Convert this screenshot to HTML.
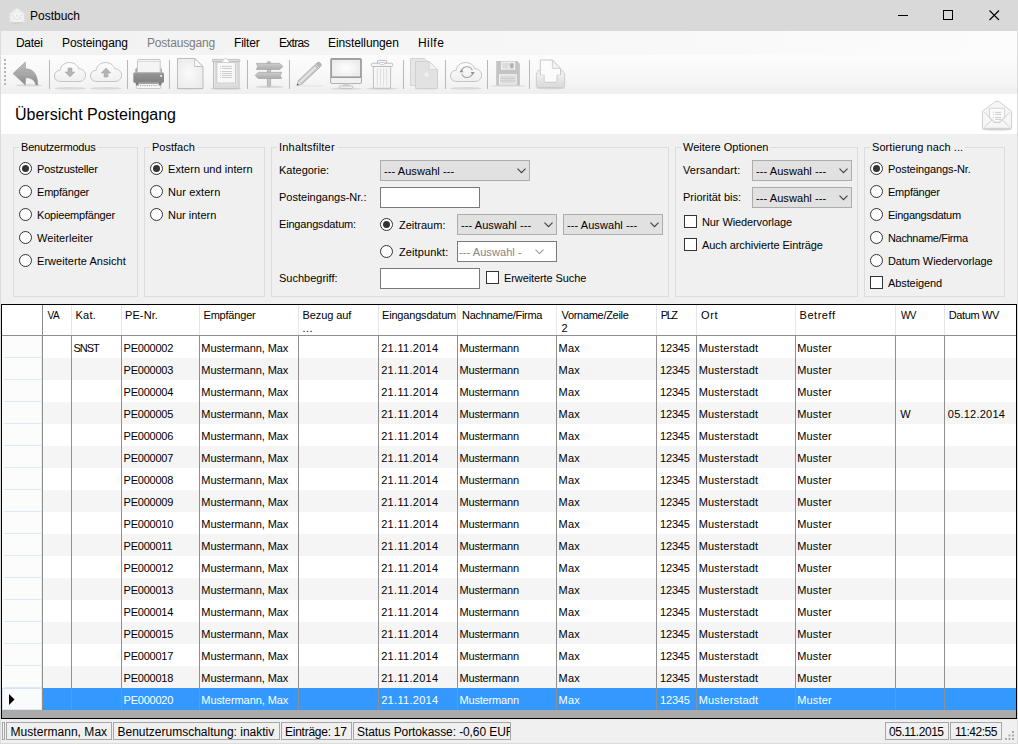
<!DOCTYPE html>
<html lang="de"><head><meta charset="utf-8"><title>Postbuch</title>
<style>
html,body{margin:0;padding:0}
body{width:1018px;height:744px;overflow:hidden;background:#f0f0f0;font-family:"Liberation Sans",sans-serif;font-size:11px;color:#000}
.win{position:relative;width:1018px;height:744px;overflow:hidden;background:#f0f0f0}
.win div,.win span,.win svg{position:absolute;box-sizing:border-box}
.title{left:0;top:0;width:1018px;height:31px;background:#d9d9d9}
.ticon{left:8px;top:6px}
.ttext{left:30px;top:9px;font-size:12px;line-height:15px;white-space:nowrap}
.menu{left:1px;top:31px;width:1016px;height:24px;background:linear-gradient(90deg,#f1f1f1,#fcfcfc)}
.menu span{top:5px;font-size:12px;line-height:15px;white-space:nowrap;margin-left:-1px}
.menu .dis{color:#7c7c7c}
.tb{left:1px;top:55px;width:1016px;height:39px;background:linear-gradient(180deg,#fcfcfc 0%,#f8f8f8 50%,#efefef 100%)}
.tb .sep{top:5px;width:1px;height:29px;background:#b9b9b9}
.head{left:1px;top:94px;width:1016px;height:40px;background:#fff}
.htext{left:14px;top:11px;font-size:16px;line-height:19px;white-space:nowrap}
.hicon{left:977px;top:4px}
.filter{left:1px;top:134px;width:1016px;height:170px;background:#f0f0f0}
.gb{border:1px solid #dcdcdc}
.gbl{background:#f0f0f0;padding:0 2px;font-size:11px;line-height:13px;white-space:nowrap}
.lb{font-size:11px;line-height:13px;white-space:nowrap}
.rd{width:13px;height:13px;border:1px solid #333;border-radius:50%;background:#fff}
.rd.on::after{content:"";position:absolute;left:2px;top:2px;width:7px;height:7px;border-radius:50%;background:#333}
.cb{width:13px;height:13px;border:1px solid #333;background:#fff}
.tx{height:21px;border:1px solid #7a7a7a;background:#fff}
.dd{height:21px;border:1px solid #adadad;background:#e1e1e1;font-size:11px;line-height:21px;padding-left:3px;white-space:nowrap;letter-spacing:.08px}
.dd.off{padding-left:1px;background:#fff;border-color:#7a7a7a;color:#858585}
.dd svg{right:3.5px;top:7px}
.dd.off svg{right:12px}
.grid{left:1px;top:304px;width:1016px;height:415px;background:#fff;border:1px solid #000;box-shadow:inset 0 0 0 1px rgba(0,0,0,.45)}
.ghead{left:0;top:0;width:1014px;height:31px;background:#fff;border-bottom:1px solid #8e8e8e}
.hc{top:0;height:30px;border-right:1px solid #e6e6e6;font-size:11px;line-height:13px;padding:4px 0 0 3px;white-space:nowrap;overflow:hidden}
.hc0{border-right-color:#8c8c8c}
.hcl{border-right:0}
.row{left:0;width:1014px;height:22px;background:#fff}
.row.alt{background:#f5f5f5}
.row.sel{background:#3399ff;color:#fff}
.row .c{top:0;height:22px;border-right:1px solid #909090;font-size:11px;line-height:13px;padding:6px 0 0 1px;white-space:nowrap;overflow:hidden}
.row .k13{border-right:0}
.row .rh{top:0;height:22px;background:#fcfcfc;border-right:1px solid #909090}
.row .rh::after{content:"";position:absolute;left:2px;right:0;bottom:0;height:1px;background:#dbe8f8}
.row .rh::before{content:"";position:absolute;right:0;top:0;bottom:0;width:1px;background:#e3edf9}
.row.sel .rh{background:#fafbfd;box-shadow:inset 0 0 0 1px #d5e3f5}
.gfoot{left:0;top:405px;width:1014px;height:8px;background:#ababab}
.status{left:0;top:719px;width:1018px;height:25px;background:#f0f0f0}
.sp{top:3px;height:18px;border:1px solid #a6a6a6;background:#f0f0f0;font-size:12px;line-height:14px;padding:2px 0 0 3px;white-space:nowrap;overflow:hidden}
.sgrip{left:2px;top:3px;width:3px;height:18px;border:1px solid #a6a6a6;border-right-color:#a6a6a6;background:#f4f4f4}
.sz{left:1004px;top:11px}
.fl{left:0;top:0;width:0;height:0;overflow:visible}
.wb{background:#dbdbdb}
.win .hc span{position:static}

.row .k0{left:0px;width:41px;letter-spacing:0px;padding-left:1px}
.row .k1{left:41px;width:29px;letter-spacing:0px;padding-left:1px}
.row .k2{left:70px;width:50px;letter-spacing:-1.0px;padding-left:1.4px}
.row .k3{left:120px;width:78px;letter-spacing:-0.23px;padding-left:1.6px}
.row .k4{left:198px;width:99px;letter-spacing:-0.07px;padding-left:1.3px}
.row .k5{left:297px;width:80px;letter-spacing:0px;padding-left:1px}
.row .k6{left:377px;width:79px;letter-spacing:0.3px;padding-left:2.2px}
.row .k7{left:456px;width:99px;letter-spacing:-0.18px;padding-left:1.5px}
.row .k8{left:555px;width:100px;letter-spacing:0.25px;padding-left:1.5px}
.row .k9{left:655px;width:40px;letter-spacing:-0.17px;padding-left:3px}
.row .k10{left:695px;width:99px;letter-spacing:0.2px;padding-left:1.7px}
.row .k11{left:794px;width:100px;letter-spacing:0.18px;padding-left:1.2px}
.row .k12{left:894px;width:49px;letter-spacing:-0.5px;padding-left:4.2px}
.row .k13{left:943px;width:71px;letter-spacing:0.22px;padding-left:2.8px}
</style></head><body>
<div class="win">
<div class="title">
<svg class="ticon" width="18" height="18" viewBox="8 6 18 18"><ellipse cx="17" cy="22.300" rx="7.500" ry=".9" fill="#bdbdbd"/><path d="M9.900 22.200V13.500L16.300 8.500H17.700L24.200 13.500V22.200Z" fill="#f4f4f4" stroke="#e0e0e0" stroke-width=".7" stroke-linejoin="round"/><path d="M13.600 12.200H20.500V17L18.500 19.300H15.600L13.600 17Z" fill="#fcfcfc" stroke="#dcdcdc" stroke-width=".6"/><path d="M15.500 14H18.600V17.200H15.500Z" fill="#e6e6e6"/><path d="M10.800 14.300L15.700 18.800Q17 19.700 18.300 18.800L23.300 14.300M10.800 21.500L14.500 18M23.300 21.500L19.600 18" fill="none" stroke="#dcdcdc" stroke-width=".8"/></svg>
<span class="ttext">Postbuch</span>
<svg class="wbtn" style="left:898px;top:15px" width="12" height="2" viewBox="0 0 12 2"><rect x="0" y="0" width="10" height="1" fill="#000"/></svg>
<svg class="wbtn" style="left:943px;top:10px" width="12" height="12" viewBox="0 0 12 12"><rect x=".5" y=".5" width="9" height="9" fill="none" stroke="#000" stroke-width="1"/></svg>
<svg class="wbtn" style="left:989px;top:10px" width="12" height="12" viewBox="0 0 12 12"><path d="M.5 .5L10 10M10 .5L.5 10" fill="none" stroke="#000" stroke-width="1.1"/></svg>
</div>
<div class="menu">
<span style="left:16px;letter-spacing:-.3px">Datei</span><span style="left:62px;letter-spacing:-.07px">Posteingang</span><span style="left:147px;letter-spacing:-.2px" class="dis">Postausgang</span><span style="left:234px;letter-spacing:-.2px">Filter</span><span style="left:279px;letter-spacing:-.7px">Extras</span><span style="left:328px;letter-spacing:-.1px">Einstellungen</span><span style="left:418px;letter-spacing:.45px">Hilfe</span>
</div>
<div class="tb">
<svg style="left:0;top:0" width="1016" height="39" viewBox="1 55 1016 39">
<defs>
<linearGradient id="gArrow" x1="0" y1="0" x2="0" y2="1"><stop offset="0" stop-color="#bcbcbc"/><stop offset=".55" stop-color="#a6a6a6"/><stop offset="1" stop-color="#8a8a8a"/></linearGradient>
<linearGradient id="gCloud" x1="0" y1="0" x2="0" y2="1"><stop offset="0" stop-color="#fdfdfd"/><stop offset="1" stop-color="#efefef"/></linearGradient>
<linearGradient id="gPrn" x1="0" y1="0" x2="0" y2="1"><stop offset="0" stop-color="#b0b0b0"/><stop offset=".15" stop-color="#949494"/><stop offset="1" stop-color="#818181"/></linearGradient>
<radialGradient id="gPage" cx=".45" cy=".5" r=".7"><stop offset="0" stop-color="#fafafa"/><stop offset="1" stop-color="#e9e9e9"/></radialGradient>
<linearGradient id="gTray" x1="0" y1="0" x2="0" y2="1"><stop offset="0" stop-color="#f4f4f4"/><stop offset="1" stop-color="#dadada"/></linearGradient>
<linearGradient id="gSign" x1="0" y1="0" x2="0" y2="1"><stop offset="0" stop-color="#cdcdcd"/><stop offset="1" stop-color="#adadad"/></linearGradient>
<linearGradient id="gPost" x1="0" y1="0" x2="1" y2="0"><stop offset="0" stop-color="#a8a8a8"/><stop offset=".5" stop-color="#d0d0d0"/><stop offset="1" stop-color="#a8a8a8"/></linearGradient>
<radialGradient id="gScr" cx=".5" cy=".5" r=".55"><stop offset="0" stop-color="#ffffff"/><stop offset="1" stop-color="#ececec"/></radialGradient>
<linearGradient id="gPen" x1="0" y1="0" x2="0" y2="1"><stop offset="0" stop-color="#b9b9b9"/><stop offset=".45" stop-color="#ececec"/><stop offset="1" stop-color="#b4b4b4"/></linearGradient>
<path id="cloud" d="M7 19.500C3 19.500 .5 17.200 .5 13.800C.5 10.500 3 8.300 6.200 8.300C6.700 3.800 10.500 .5 15.500 .5C20 .5 23.500 3 24.800 6.800C28.800 6.800 31.500 9.600 31.500 13.200C31.500 16.800 28.800 19.500 25 19.500Z"/>
</defs>
<!-- grip -->
<g fill="#b5b5b5"><rect x="4" y="59" width="2" height="2"/><rect x="4" y="63" width="2" height="2"/><rect x="4" y="67" width="2" height="2"/><rect x="4" y="71" width="2" height="2"/><rect x="4" y="75" width="2" height="2"/><rect x="4" y="79" width="2" height="2"/><rect x="4" y="83" width="2" height="2"/></g>
<!-- separators -->
<g fill="#b8b8b8"><rect x="49" y="60" width="1" height="29"/><rect x="127" y="60" width="1" height="29"/><rect x="169" y="60" width="1" height="29"/><rect x="247" y="60" width="1" height="29"/><rect x="289" y="60" width="1" height="29"/><rect x="403" y="60" width="1" height="29"/><rect x="445" y="60" width="1" height="29"/><rect x="487" y="60" width="1" height="29"/><rect x="529" y="60" width="1" height="29"/></g>
<!-- back arrow -->
<ellipse cx="29" cy="85.300" rx="13.500" ry="1.200" fill="#dadada"/>
<path d="M13 73.500L25.300 62L25.700 68.800C33 68.800 38 74.500 37.700 85L35.800 85C35 80.500 31.500 77.800 25.700 77.800L25.300 85Z" fill="url(#gArrow)" stroke="#929292" stroke-width=".5" stroke-linejoin="round"/>
<!-- cloud down -->
<ellipse cx="70" cy="88.300" rx="16" ry="1.200" fill="#d9d9d9"/>
<use href="#cloud" x="54" y="62" fill="url(#gCloud)" stroke="#c4c4c4" stroke-width="1"/>
<path d="M68 68H72V72H74.800L70 77L65.200 72H68Z" fill="#b4b4b4" stroke="#a2a2a2" stroke-width=".5"/>
<!-- cloud up -->
<ellipse cx="106" cy="88.300" rx="16" ry="1.200" fill="#d9d9d9"/>
<use href="#cloud" x="90" y="62" fill="url(#gCloud)" stroke="#c4c4c4" stroke-width="1"/>
<path d="M104 77H108V73H110.800L106 68L101.200 73H104Z" fill="#b4b4b4" stroke="#a2a2a2" stroke-width=".5"/>
<!-- printer -->
<path d="M135.300 73V69L137 67.500V73ZM162 73V69L160.300 67.500V73Z" fill="#a9a9a9"/>
<path d="M137.500 73V60.700Q137.500 59.500 138.700 59.500H159Q160.200 59.500 160.200 60.700V73Z" fill="#f4f4f4" stroke="#c6c6c6"/>
<path d="M138 61.500H159.700" stroke="#d4d4d4" stroke-width=".8"/>
<rect x="136.300" y="81.500" width="24.500" height="7" rx="1" fill="#f6f6f6" stroke="#c9c9c9"/>
<path d="M135.300 82H138.600V85.500H136.300ZM162 82H158.700V85.500H161Z" fill="#7c7c7c"/>
<path d="M139 83.400H158.500" stroke="#8c8c8c" stroke-width=".9"/>
<path d="M140 85.500H158" stroke="#a0a0a0" stroke-width=".9" stroke-dasharray="1.200 1"/>
<rect x="133.300" y="72.300" width="30.700" height="10.500" rx="1.500" fill="url(#gPrn)"/>
<rect x="160.100" y="75.200" width="1.900" height="1.400" fill="#fff"/>
<!-- page -->
<ellipse cx="190.500" cy="88.900" rx="13" ry=".9" fill="#dcdcdc"/>
<path d="M177.500 58.500H194.700L203 66.500V88.500H177.500Z" fill="url(#gPage)" stroke="#bdbdbd"/>
<path d="M194.700 58.500V66.500H203Z" fill="#fcfcfc" stroke="#c2c2c2" stroke-linejoin="round"/>
<!-- clipboard -->
<ellipse cx="226" cy="88.800" rx="15.500" ry="1" fill="#d6d6d6"/>
<rect x="213.500" y="61" width="25.500" height="27.300" fill="#ececec" stroke="#bdbdbd"/>
<rect x="215.300" y="62" width="21.900" height="23" fill="none" stroke="#d2d2d2" stroke-width=".8"/>
<rect x="214" y="85.300" width="24.500" height="2.600" fill="#dadada"/>
<rect x="212.300" y="59.400" width="27.600" height="2.300" rx=".6" fill="#dddddd" stroke="#b9b9b9" stroke-width=".8"/>
<rect x="216.800" y="62.300" width="18.800" height="20.800" fill="#f8f8f8" stroke="#c4c4c4" stroke-width=".9"/>
<path d="M222.300 62.500C222.300 60 224.500 60 225.200 58.200H226.400C227.100 60 229.400 60 229.400 62.500Z" fill="#fdfdfd" stroke="#c4c4c4" stroke-width=".6"/>
<g stroke="#c2c2c2" stroke-width=".8"><path d="M222 66.400H232M222 68.500H232M222 71.500H232M222 73.500H232M222 75.500H232M222 77.500H232"/><path d="M220 66.400H220.900M220 68.500H220.900M220 71.500H220.900M220 73.500H220.900M220 75.500H220.900M220 77.500H220.900"/></g>
<!-- signpost -->
<ellipse cx="269.500" cy="86.800" rx="14.500" ry="1.300" fill="#d8d8d8"/>
<rect x="267.300" y="61.200" width="3.300" height="25.500" rx="1.600" fill="url(#gPost)" stroke="#a4a4a4" stroke-width=".5"/>
<path d="M256.300 63.400H279.800L282.800 66.400L279.800 69.500H256.300L257.800 66.400Z" fill="url(#gSign)" stroke="#a3a3a3" stroke-width=".7"/>
<path d="M281.700 72.300H258.200L255.200 75.400L258.200 78.500H281.700L280.200 75.400Z" fill="url(#gSign)" stroke="#a3a3a3" stroke-width=".7"/>
<!-- pencil -->
<path d="M295 85.900H323" stroke="#e2e2e2" stroke-width="1.100"/>
<g transform="translate(297 85.300) rotate(-43.400)">
<path d="M0 0L4.500 -2.500H27V2.500H4.500Z" fill="url(#gPen)" stroke="#a8a8a8" stroke-width=".7"/>
<path d="M0 0L4.500 -2.500V2.500Z" fill="#e4e4e4" stroke="#b0b0b0" stroke-width=".5"/>
<path d="M0 0L1.700 -.95V.95Z" fill="#3a3a3a"/>
<path d="M27 -2.500H29.700Q32.200 -2.500 32.200 0Q32.200 2.500 29.700 2.500H27Z" fill="#b7b7b7" stroke="#a0a0a0" stroke-width=".7"/>
<path d="M27.900 -2.500V2.500" stroke="#eeeeee" stroke-width=".8"/>
</g>
<!-- monitor -->
<ellipse cx="346" cy="88.700" rx="15.500" ry="1" fill="#dadada"/>
<rect x="330.200" y="58.100" width="31.700" height="25.600" rx="1.700" fill="#9d9d9d"/>
<rect x="332" y="59.900" width="28.100" height="16.500" fill="url(#gScr)"/>
<path d="M331.100 78.100H361V82Q361 82.900 360.100 82.900H332Q331.100 82.900 331.100 82Z" fill="#f1f1f1"/>
<path d="M343.300 83.700H348.900L349.600 86H342.600Z" fill="#d2d2d2"/>
<rect x="339.200" y="85.800" width="13.700" height="2.700" rx="1.300" fill="#ececec" stroke="#bdbdbd" stroke-width=".8"/>
<!-- trash -->
<ellipse cx="382" cy="88.600" rx="15.500" ry="1.100" fill="#dadada"/>
<path d="M377.500 63.500V61Q377.500 60.400 378.100 60.400H386Q386.600 60.400 386.600 61V63.500" fill="#f6f6f6" stroke="#b8b8b8" stroke-width=".9"/>
<path d="M373.300 66.500H390.700L390.400 88.200H373.600Z" fill="#f7f7f7" stroke="#b9b9b9" stroke-width=".9"/>
<path d="M377.300 68.300V86.500M380.500 68.300V86.500M383.600 68.300V86.500M386.700 68.300V86.500" stroke="#dedede" stroke-width="1.100"/>
<rect x="371.400" y="63.200" width="21.300" height="3.300" rx="1.200" fill="#f6f6f6" stroke="#b8b8b8" stroke-width=".9"/>
<rect x="379.600" y="62.500" width="5" height="2" rx="1" fill="#fdfdfd" stroke="#bcbcbc" stroke-width=".7"/>
<!-- copy -->
<ellipse cx="426" cy="88.900" rx="12" ry=".8" fill="#e2e2e2"/>
<path d="M410.500 58.500H424.500L427 61V85.500H410.500Z" fill="#e6e6e6" stroke="#d0d0d0" stroke-width=".9"/>
<path d="M415.500 61.500H429.300L437.500 69.500V88.500H415.500Z" fill="#e2e2e2" stroke="#cdcdcd" stroke-width=".9"/>
<path d="M429.300 61.500V69.500H437.500Z" fill="#f2f2f2" stroke="#d2d2d2" stroke-width=".8" stroke-linejoin="round"/>
<circle cx="426.500" cy="74.600" r="2.600" fill="#e9e9e9"/>
<path d="M425.200 74.600H427.800M426.500 73.300V75.900" stroke="#fbfbfb" stroke-width=".9"/>
<!-- cloud sync -->
<ellipse cx="466" cy="88.300" rx="16" ry="1.200" fill="#d9d9d9"/>
<use href="#cloud" x="450" y="62" fill="url(#gCloud)" stroke="#c4c4c4" stroke-width="1"/>
<path d="M461.500 71.800A5.600 5.600 0 0 1 472.300 70.300M472.600 72.500A5.600 5.600 0 0 1 461.800 73.900" fill="none" stroke="#a0a0a0" stroke-width="1.100"/>
<path d="M459.400 72.300H463.400L461.400 69.300ZM470.700 72.100H474.700L472.700 75.100Z" fill="#8f8f8f"/>
<!-- floppy -->
<path d="M491.500 85.900H524.500" stroke="#dcdcdc" stroke-width="1.200"/>
<path d="M496.200 61.100H517.300L519.900 63.700V85.500H496.200Z" fill="#c4c4c4"/>
<rect x="501" y="61.700" width="14.200" height="8" fill="#f1f1f1"/>
<rect x="502.300" y="63" width="11.700" height="5.600" fill="#dbdbdb"/>
<rect x="510.700" y="63.500" width="2.400" height="4.600" rx="1" fill="#b2b2b2" stroke="#a4a4a4" stroke-width=".5"/>
<rect x="508" y="66" width="1.100" height="1.200" fill="#fff"/>
<rect x="499" y="74.200" width="17.800" height="10.500" fill="#f3f3f3"/>
<rect x="500.200" y="75.400" width="15.400" height="8.300" fill="#dddddd"/>
<path d="M500.200 78.200H515.600M500.200 80.900H515.600" stroke="#cbcbcb" stroke-width=".9"/>
<!-- inbox -->
<ellipse cx="550.500" cy="88.200" rx="14" ry="1" fill="#d4d4d4"/>
<path d="M540.300 60H552.400L560.500 68.400V82.500H540.300Z" fill="#fbfbfb" stroke="#c2c2c2" stroke-width=".9"/>
<path d="M552.400 60V68.400H560.500Z" fill="#f3f3f3" stroke="#c6c6c6" stroke-width=".8" stroke-linejoin="round"/>
<path d="M536.300 74L538.300 70.300H540.300V75.200H544.200V80.500Q544.200 82.300 546 82.300H555.200Q557 82.300 557 80.500V75.200H560.600V70.300H562.600L564.600 74V86.300Q564.600 87.600 563.300 87.600H537.600Q536.300 87.600 536.300 86.300Z" fill="url(#gTray)" stroke="#c6c6c6" stroke-width=".8"/>
<path d="M537.300 75.900H543.500M557.700 75.900H563.600" stroke="#fafafa" stroke-width=".7"/>
</svg>
</div>

<div class="head"><span class="htext">Übersicht Posteingang</span>
<svg class="hicon" width="36" height="34" viewBox="978 98 36 34"><ellipse cx="997" cy="129.300" rx="14.500" ry="1.300" fill="#d2d2d2"/><path d="M982.400 128.300V111.300L995.300 101.400H998.700L1011.600 111.300V128.300Z" fill="#f6f6f6" stroke="#cbcbcb" stroke-width=".9" stroke-linejoin="round"/><path d="M989.400 108.300H1004.700V118L1000 122.500H994L989.400 118Z" fill="#fbfbfb" stroke="#cdcdcd" stroke-width=".8"/><path d="M995.200 112.400H1000.900M995.200 114.400H1000.900M995.200 117.400H1000.900M995.200 119.400H1000.900M993.100 112.400H994M993.100 114.400H994M993.100 117.400H994" stroke="#c6c6c6" stroke-width=".9"/><path d="M984.300 112.300L994.500 121.700Q997 123.300 999.500 121.700L1009.700 112.300M984.300 127L991.800 120M1009.700 127L1002.200 120" fill="none" stroke="#cdcdcd" stroke-width=".9"/></svg>
</div>
<div class="fl">
<div class="gb" style="left:13px;top:147px;width:125px;height:150px"></div>
<span class="gbl" style="left:19px;top:141px;letter-spacing:-0.2px">Benutzermodus</span>
<div class="rd on" style="left:19px;top:162px"></div>
<span class="lb" style="left:37px;top:163px;letter-spacing:-0.17px">Postzusteller</span>
<div class="rd" style="left:19px;top:185px"></div>
<span class="lb" style="left:37px;top:186px;letter-spacing:-0.2px">Empfänger</span>
<div class="rd" style="left:19px;top:208px"></div>
<span class="lb" style="left:37px;top:209px;letter-spacing:-0.2px">Kopieempfänger</span>
<div class="rd" style="left:19px;top:231px"></div>
<span class="lb" style="left:37px;top:232px;letter-spacing:0.05px">Weiterleiter</span>
<div class="rd" style="left:19px;top:254px"></div>
<span class="lb" style="left:37px;top:255px;letter-spacing:0.04px">Erweiterte Ansicht</span>
<div class="gb" style="left:144px;top:147px;width:121px;height:150px"></div>
<span class="gbl" style="left:150px;top:141px">Postfach</span>
<div class="rd on" style="left:150px;top:162px"></div>
<span class="lb" style="left:168px;top:163px;letter-spacing:0.05px">Extern und intern</span>
<div class="rd" style="left:150px;top:185px"></div>
<span class="lb" style="left:168px;top:186px;letter-spacing:0.1px">Nur extern</span>
<div class="rd" style="left:150px;top:208px"></div>
<span class="lb" style="left:168px;top:209px">Nur intern</span>
<div class="gb" style="left:271px;top:147px;width:398px;height:150px"></div>
<span class="gbl" style="left:277px;top:141px;letter-spacing:0.2px">Inhaltsfilter</span>
<span class="lb" style="left:279px;top:164px">Kategorie:</span>
<div class="dd" style="left:380px;top:160px;width:150px">--- Auswahl ---<svg width="9" height="6" viewBox="0 0 9 6"><path d="M.5 .7L4.500 4.700L8.500 .7" fill="none" stroke="#444" stroke-width="1.2"/></svg></div>
<span class="lb" style="left:279px;top:191px">Posteingangs-Nr.:</span>
<div class="tx" style="left:380px;top:187px;width:100px"></div>
<span class="lb" style="left:279px;top:218px;letter-spacing:-0.18px">Eingangsdatum:</span>
<div class="rd on" style="left:380px;top:218px"></div>
<span class="lb" style="left:399px;top:219px">Zeitraum:</span>
<div class="dd" style="left:457px;top:214px;width:100px">--- Auswahl ---<svg width="9" height="6" viewBox="0 0 9 6"><path d="M.5 .7L4.500 4.700L8.500 .7" fill="none" stroke="#444" stroke-width="1.2"/></svg></div>
<div class="dd" style="left:563px;top:214px;width:100px">--- Auswahl ---<svg width="9" height="6" viewBox="0 0 9 6"><path d="M.5 .7L4.500 4.700L8.500 .7" fill="none" stroke="#444" stroke-width="1.2"/></svg></div>
<div class="rd" style="left:380px;top:245px"></div>
<span class="lb" style="left:399px;top:246px;letter-spacing:0.1px">Zeitpunkt:</span>
<div class="dd off" style="left:457px;top:241px;width:100px">--- Auswahl -<svg width="9" height="6" viewBox="0 0 9 6"><path d="M.5 .7L4.500 4.700L8.500 .7" fill="none" stroke="#a0a0a0" stroke-width="1.2"/></svg></div>
<span class="lb" style="left:279px;top:272px">Suchbegriff:</span>
<div class="tx" style="left:380px;top:268px;width:100px"></div>
<div class="cb" style="left:486px;top:271px"></div>
<span class="lb" style="left:504px;top:272px;letter-spacing:-0.1px">Erweiterte Suche</span>
<div class="gb" style="left:675px;top:147px;width:183px;height:150px"></div>
<span class="gbl" style="left:681px;top:141px">Weitere Optionen</span>
<span class="lb" style="left:683px;top:164px;letter-spacing:0.1px">Versandart:</span>
<div class="dd" style="left:752px;top:160px;width:100px">--- Auswahl ---<svg width="9" height="6" viewBox="0 0 9 6"><path d="M.5 .7L4.500 4.700L8.500 .7" fill="none" stroke="#444" stroke-width="1.2"/></svg></div>
<span class="lb" style="left:683px;top:191px">Priorität bis:</span>
<div class="dd" style="left:752px;top:187px;width:100px">--- Auswahl ---<svg width="9" height="6" viewBox="0 0 9 6"><path d="M.5 .7L4.500 4.700L8.500 .7" fill="none" stroke="#444" stroke-width="1.2"/></svg></div>
<div class="cb" style="left:684px;top:215px"></div>
<span class="lb" style="left:702px;top:216px;letter-spacing:-0.1px">Nur Wiedervorlage</span>
<div class="cb" style="left:684px;top:238px"></div>
<span class="lb" style="left:702px;top:239px;letter-spacing:-0.08px">Auch archivierte Einträge</span>
<div class="gb" style="left:864px;top:147px;width:141px;height:150px"></div>
<span class="gbl" style="left:870px;top:141px;letter-spacing:0.07px">Sortierung nach ...</span>
<div class="rd on" style="left:870px;top:162px"></div>
<span class="lb" style="left:888px;top:163px;letter-spacing:-0.1px">Posteingangs-Nr.</span>
<div class="rd" style="left:870px;top:185px"></div>
<span class="lb" style="left:888px;top:186px;letter-spacing:-0.24px">Empfänger</span>
<div class="rd" style="left:870px;top:208px"></div>
<span class="lb" style="left:888px;top:209px;letter-spacing:-0.28px">Eingangsdatum</span>
<div class="rd" style="left:870px;top:231px"></div>
<span class="lb" style="left:888px;top:232px;letter-spacing:-0.33px">Nachname/Firma</span>
<div class="rd" style="left:870px;top:254px"></div>
<span class="lb" style="left:888px;top:255px;letter-spacing:-0.1px">Datum Wiedervorlage</span>
<div class="cb" style="left:870px;top:276px"></div>
<span class="lb" style="left:888px;top:277px;letter-spacing:-0.1px">Absteigend</span>
</div>
<div class="grid">
<div class="ghead">
<div class="hc hc0" style="left:0px;width:41px;letter-spacing:0px;padding-left:3px"></div>
<div class="hc" style="left:41px;width:29px;letter-spacing:-0.5px;padding-left:4.5px"><span style="font-size:10px">VA</span></div>
<div class="hc" style="left:70px;width:50px;letter-spacing:0.27px;padding-left:3.5px">Kat.</div>
<div class="hc" style="left:120px;width:78px;letter-spacing:0.1px;padding-left:3px">PE-Nr.</div>
<div class="hc" style="left:198px;width:99px;letter-spacing:-0.2px;padding-left:3.5px">Empfänger</div>
<div class="hc" style="left:297px;width:80px;letter-spacing:-0.1px;padding-left:3.5px">Bezug auf<br><span style="letter-spacing:.5px">...</span></div>
<div class="hc" style="left:377px;width:79px;letter-spacing:-0.18px;padding-left:3px">Eingangsdatum</div>
<div class="hc" style="left:456px;width:99px;letter-spacing:-0.3px;padding-left:4px">Nachname/Firma</div>
<div class="hc" style="left:555px;width:100px;letter-spacing:-0.3px;padding-left:4.5px">Vorname/Zeile<br>2</div>
<div class="hc" style="left:655px;width:40px;letter-spacing:-1.5px;padding-left:3.8px">PLZ</div>
<div class="hc" style="left:695px;width:99px;letter-spacing:0.7px;padding-left:3.9px">Ort</div>
<div class="hc" style="left:794px;width:100px;letter-spacing:0.55px;padding-left:3.5px">Betreff</div>
<div class="hc" style="left:894px;width:49px;letter-spacing:-0.7px;padding-left:5px"><span style="font-size:10px">WV</span></div>
<div class="hc hcl" style="left:943px;width:71px;letter-spacing:-0.35px;padding-left:3.7px">Datum WV</div>
</div>
<div class="row" style="top:31px">
<div class="rh k0"></div>
<div class="c k1"></div>
<div class="c k2">SNST</div>
<div class="c k3">PE000002</div>
<div class="c k4">Mustermann, Max</div>
<div class="c k5"></div>
<div class="c k6">21.11.2014</div>
<div class="c k7">Mustermann</div>
<div class="c k8">Max</div>
<div class="c k9">12345</div>
<div class="c k10">Musterstadt</div>
<div class="c k11">Muster</div>
<div class="c k12"></div>
<div class="c k13"></div>
</div>
<div class="row alt" style="top:53px">
<div class="rh k0"></div>
<div class="c k1"></div>
<div class="c k2"></div>
<div class="c k3">PE000003</div>
<div class="c k4">Mustermann, Max</div>
<div class="c k5"></div>
<div class="c k6">21.11.2014</div>
<div class="c k7">Mustermann</div>
<div class="c k8">Max</div>
<div class="c k9">12345</div>
<div class="c k10">Musterstadt</div>
<div class="c k11">Muster</div>
<div class="c k12"></div>
<div class="c k13"></div>
</div>
<div class="row" style="top:75px">
<div class="rh k0"></div>
<div class="c k1"></div>
<div class="c k2"></div>
<div class="c k3">PE000004</div>
<div class="c k4">Mustermann, Max</div>
<div class="c k5"></div>
<div class="c k6">21.11.2014</div>
<div class="c k7">Mustermann</div>
<div class="c k8">Max</div>
<div class="c k9">12345</div>
<div class="c k10">Musterstadt</div>
<div class="c k11">Muster</div>
<div class="c k12"></div>
<div class="c k13"></div>
</div>
<div class="row alt" style="top:97px">
<div class="rh k0"></div>
<div class="c k1"></div>
<div class="c k2"></div>
<div class="c k3">PE000005</div>
<div class="c k4">Mustermann, Max</div>
<div class="c k5"></div>
<div class="c k6">21.11.2014</div>
<div class="c k7">Mustermann</div>
<div class="c k8">Max</div>
<div class="c k9">12345</div>
<div class="c k10">Musterstadt</div>
<div class="c k11">Muster</div>
<div class="c k12">W</div>
<div class="c k13">05.12.2014</div>
</div>
<div class="row" style="top:119px">
<div class="rh k0"></div>
<div class="c k1"></div>
<div class="c k2"></div>
<div class="c k3">PE000006</div>
<div class="c k4">Mustermann, Max</div>
<div class="c k5"></div>
<div class="c k6">21.11.2014</div>
<div class="c k7">Mustermann</div>
<div class="c k8">Max</div>
<div class="c k9">12345</div>
<div class="c k10">Musterstadt</div>
<div class="c k11">Muster</div>
<div class="c k12"></div>
<div class="c k13"></div>
</div>
<div class="row alt" style="top:141px">
<div class="rh k0"></div>
<div class="c k1"></div>
<div class="c k2"></div>
<div class="c k3">PE000007</div>
<div class="c k4">Mustermann, Max</div>
<div class="c k5"></div>
<div class="c k6">21.11.2014</div>
<div class="c k7">Mustermann</div>
<div class="c k8">Max</div>
<div class="c k9">12345</div>
<div class="c k10">Musterstadt</div>
<div class="c k11">Muster</div>
<div class="c k12"></div>
<div class="c k13"></div>
</div>
<div class="row" style="top:163px">
<div class="rh k0"></div>
<div class="c k1"></div>
<div class="c k2"></div>
<div class="c k3">PE000008</div>
<div class="c k4">Mustermann, Max</div>
<div class="c k5"></div>
<div class="c k6">21.11.2014</div>
<div class="c k7">Mustermann</div>
<div class="c k8">Max</div>
<div class="c k9">12345</div>
<div class="c k10">Musterstadt</div>
<div class="c k11">Muster</div>
<div class="c k12"></div>
<div class="c k13"></div>
</div>
<div class="row alt" style="top:185px">
<div class="rh k0"></div>
<div class="c k1"></div>
<div class="c k2"></div>
<div class="c k3">PE000009</div>
<div class="c k4">Mustermann, Max</div>
<div class="c k5"></div>
<div class="c k6">21.11.2014</div>
<div class="c k7">Mustermann</div>
<div class="c k8">Max</div>
<div class="c k9">12345</div>
<div class="c k10">Musterstadt</div>
<div class="c k11">Muster</div>
<div class="c k12"></div>
<div class="c k13"></div>
</div>
<div class="row" style="top:207px">
<div class="rh k0"></div>
<div class="c k1"></div>
<div class="c k2"></div>
<div class="c k3">PE000010</div>
<div class="c k4">Mustermann, Max</div>
<div class="c k5"></div>
<div class="c k6">21.11.2014</div>
<div class="c k7">Mustermann</div>
<div class="c k8">Max</div>
<div class="c k9">12345</div>
<div class="c k10">Musterstadt</div>
<div class="c k11">Muster</div>
<div class="c k12"></div>
<div class="c k13"></div>
</div>
<div class="row alt" style="top:229px">
<div class="rh k0"></div>
<div class="c k1"></div>
<div class="c k2"></div>
<div class="c k3">PE000011</div>
<div class="c k4">Mustermann, Max</div>
<div class="c k5"></div>
<div class="c k6">21.11.2014</div>
<div class="c k7">Mustermann</div>
<div class="c k8">Max</div>
<div class="c k9">12345</div>
<div class="c k10">Musterstadt</div>
<div class="c k11">Muster</div>
<div class="c k12"></div>
<div class="c k13"></div>
</div>
<div class="row" style="top:251px">
<div class="rh k0"></div>
<div class="c k1"></div>
<div class="c k2"></div>
<div class="c k3">PE000012</div>
<div class="c k4">Mustermann, Max</div>
<div class="c k5"></div>
<div class="c k6">21.11.2014</div>
<div class="c k7">Mustermann</div>
<div class="c k8">Max</div>
<div class="c k9">12345</div>
<div class="c k10">Musterstadt</div>
<div class="c k11">Muster</div>
<div class="c k12"></div>
<div class="c k13"></div>
</div>
<div class="row alt" style="top:273px">
<div class="rh k0"></div>
<div class="c k1"></div>
<div class="c k2"></div>
<div class="c k3">PE000013</div>
<div class="c k4">Mustermann, Max</div>
<div class="c k5"></div>
<div class="c k6">21.11.2014</div>
<div class="c k7">Mustermann</div>
<div class="c k8">Max</div>
<div class="c k9">12345</div>
<div class="c k10">Musterstadt</div>
<div class="c k11">Muster</div>
<div class="c k12"></div>
<div class="c k13"></div>
</div>
<div class="row" style="top:295px">
<div class="rh k0"></div>
<div class="c k1"></div>
<div class="c k2"></div>
<div class="c k3">PE000014</div>
<div class="c k4">Mustermann, Max</div>
<div class="c k5"></div>
<div class="c k6">21.11.2014</div>
<div class="c k7">Mustermann</div>
<div class="c k8">Max</div>
<div class="c k9">12345</div>
<div class="c k10">Musterstadt</div>
<div class="c k11">Muster</div>
<div class="c k12"></div>
<div class="c k13"></div>
</div>
<div class="row alt" style="top:317px">
<div class="rh k0"></div>
<div class="c k1"></div>
<div class="c k2"></div>
<div class="c k3">PE000015</div>
<div class="c k4">Mustermann, Max</div>
<div class="c k5"></div>
<div class="c k6">21.11.2014</div>
<div class="c k7">Mustermann</div>
<div class="c k8">Max</div>
<div class="c k9">12345</div>
<div class="c k10">Musterstadt</div>
<div class="c k11">Muster</div>
<div class="c k12"></div>
<div class="c k13"></div>
</div>
<div class="row" style="top:339px">
<div class="rh k0"></div>
<div class="c k1"></div>
<div class="c k2"></div>
<div class="c k3">PE000017</div>
<div class="c k4">Mustermann, Max</div>
<div class="c k5"></div>
<div class="c k6">21.11.2014</div>
<div class="c k7">Mustermann</div>
<div class="c k8">Max</div>
<div class="c k9">12345</div>
<div class="c k10">Musterstadt</div>
<div class="c k11">Muster</div>
<div class="c k12"></div>
<div class="c k13"></div>
</div>
<div class="row alt" style="top:361px">
<div class="rh k0"></div>
<div class="c k1"></div>
<div class="c k2"></div>
<div class="c k3">PE000018</div>
<div class="c k4">Mustermann, Max</div>
<div class="c k5"></div>
<div class="c k6">21.11.2014</div>
<div class="c k7">Mustermann</div>
<div class="c k8">Max</div>
<div class="c k9">12345</div>
<div class="c k10">Musterstadt</div>
<div class="c k11">Muster</div>
<div class="c k12"></div>
<div class="c k13"></div>
</div>
<div class="row sel" style="top:383px">
<div class="rh k0"><svg width="8" height="11" viewBox="0 0 8 11" style="position:absolute;left:7px;top:6px"><path d="M0 0L5.500 5.500L0 11Z" fill="#000"/></svg></div>
<div class="c k1"></div>
<div class="c k2"></div>
<div class="c k3">PE000020</div>
<div class="c k4">Mustermann, Max</div>
<div class="c k5"></div>
<div class="c k6">21.11.2014</div>
<div class="c k7">Mustermann</div>
<div class="c k8">Max</div>
<div class="c k9">12345</div>
<div class="c k10">Musterstadt</div>
<div class="c k11">Muster</div>
<div class="c k12"></div>
<div class="c k13"></div>
</div>
<div class="gfoot"></div>
</div>
<div class="status">
<div class="sgrip"></div>
<div class="sp" style="left:6px;width:106px;letter-spacing:.04px;padding-left:3.5px">Mustermann, Max</div>
<div class="sp" style="left:113px;width:167px;padding-left:3.5px">Benutzerumschaltung: inaktiv</div>
<div class="sp" style="left:281px;width:71px;letter-spacing:-.25px">Einträge: 17</div>
<div class="sp" style="left:353px;width:158px;letter-spacing:-.1px">Status Portokasse: -0,60 EUR</div>
<div class="sp" style="left:885px;width:64px;letter-spacing:-.46px">05.11.2015</div>
<div class="sp" style="left:950px;width:52px;letter-spacing:-.48px;padding-left:4px">11:42:55</div>
<svg class="sz" width="12" height="12" viewBox="0 0 12 12"><g fill="#a9a9a9"><rect x="8" y="1" width="2" height="2"/><rect x="4.500" y="4.500" width="2" height="2"/><rect x="8" y="4.500" width="2" height="2"/><rect x="1" y="8" width="2" height="2"/><rect x="4.500" y="8" width="2" height="2"/><rect x="8" y="8" width="2" height="2"/></g></svg>
</div>
<div class="wb" style="left:0;top:31px;width:1px;height:713px"></div><div class="wb" style="left:1017px;top:31px;width:1px;height:713px"></div><div class="wb" style="left:0;top:743px;width:1018px;height:1px"></div>
</div>
</body></html>
